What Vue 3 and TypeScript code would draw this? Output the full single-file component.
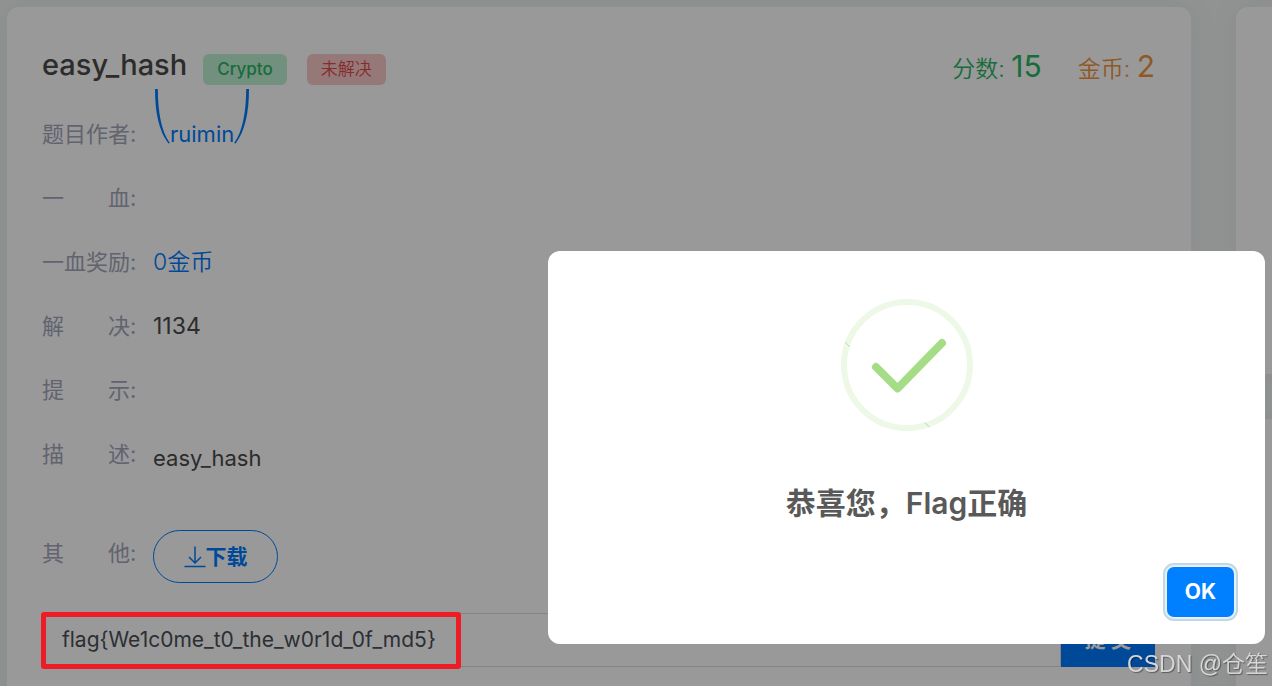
<script setup lang="ts">
import { ref } from 'vue'

interface Field {
  label: string
  value?: string
  kind?: 'author' | 'reward' | 'text' | 'description' | 'download'
}

const fields: Field[] = [
  { label: '题目作者:', value: 'ruimin', kind: 'author' },
  { label: '一　　血:' },
  { label: '一血奖励:', value: '0金币', kind: 'reward' },
  { label: '解　　决:', value: '1134', kind: 'text' },
  { label: '提　　示:' },
  { label: '描　　述:', value: 'easy_hash', kind: 'description' },
  { label: '其　　他:', value: '下载', kind: 'download' },
]

const flag = ref('flag{We1c0me_t0_the_w0r1d_0f_md5}')
const open = ref(true)
</script>

<template>
  <div class="page">
    <main class="card challenge">
      <header class="head">
        <h1>easy_hash</h1>
        <span class="badge green">Crypto</span>
        <span class="badge red">未解决</span>
        <div class="stats">
          <span class="score">分数: <b>15</b></span>
          <span class="coins">金币: <b>2</b></span>
        </div>
      </header>

      <dl class="fields">
        <div v-for="f in fields" :key="f.label" class="row" :class="f.kind">
          <dt>{{ f.label }}</dt>
          <dd>
            <a v-if="f.kind === 'author'" href="#" class="author-link">
              <svg class="parens" width="96" height="56" viewBox="0 0 96 56" aria-hidden="true">
                <path d="M1 0H3.8C4 24 7.400 42 15.800 54L14.400 54.600C5 42 1 24 1 0Z" />
                <path d="M95 0H92.200C92 24 88.600 42 80.200 54L81.600 54.600C91 42 95 24 95 0Z" />
              </svg>
              {{ f.value }}
            </a>
            <button v-else-if="f.kind === 'download'" type="button" class="download">
              <svg width="22" height="22" viewBox="0 0 22 22" aria-hidden="true">
                <path d="M11 0.5V16M5 11L11 17L17 11M0.5 20.5H21.5" />
              </svg>
              <span>{{ f.value }}</span>
            </button>
            <template v-else>{{ f.value }}</template>
          </dd>
        </div>
      </dl>

      <form class="answer" @submit.prevent="open = true">
        <input v-model="flag" type="text" aria-label="Flag" spellcheck="false" />
        <button type="submit">提 交</button>
        <span class="marker"></span>
      </form>
    </main>

    <aside class="side">
      <div class="card side-top"></div>
      <div class="card side-rest"></div>
    </aside>

    <div v-if="open" class="overlay">
      <section class="modal" role="dialog" aria-labelledby="dialog-title">
        <svg class="success" width="132" height="132" viewBox="0 0 132 132" aria-hidden="true">
          <circle cx="66" cy="66" r="63" />
          <path class="tick" d="M35 68L56.500 89.500L101 44" />
          <path class="seam" d="M4 43L9 48M83.500 123.500L88.500 128" />
        </svg>
        <h2 id="dialog-title">恭喜您，Flag正确</h2>
        <button type="button" class="ok" @click="open = false">OK</button>
      </section>
    </div>

    <span class="watermark">CSDN @仓笙</span>
  </div>
</template>

<style>
html,
body {
  overflow: hidden;
}
</style>

<style scoped>
* {
  box-sizing: border-box;
}

.page {
  display: flex;
  gap: 45px;
  height: 100vh;
  padding: 7px 0 0 7px;
  overflow: hidden;
  background: #f2f5f5;
  color: #4a4a4a;
  font-family: Inter, "Noto Sans CJK SC", sans-serif;
  font-size: 22px;
  line-height: 32px;
}

button,
input {
  font: inherit;
}

.card {
  background: #fff;
  border-radius: 12px;
  box-shadow: 0 0 28px rgba(80, 95, 110, 0.08);
}

.challenge {
  flex: 1;
  min-width: 0;
  height: 760px;
  padding: 38px 36px 38px 35px;
}

.side {
  display: flex;
  flex: 0 0 36px;
  flex-direction: column;
  gap: 45px;
  min-width: 0;
}

.side .card {
  width: 400px;
}

.side-top {
  height: 367px;
  flex-shrink: 0;
}

.side-rest {
  height: 400px;
  flex-shrink: 0;
}

.head {
  display: flex;
  align-items: center;
  height: 40px;
}

h1 {
  margin: 0 16px 0 0;
  font-size: 29px;
  font-weight: 500;
  line-height: 40px;
}

.badge {
  height: 31px;
  margin: 8px 20px 0 0;
  padding: 0 14px;
  border-radius: 6px;
  font-size: 17px;
  line-height: 31px;
}

.green {
  background: #bff0d3;
  color: #28b463;
  font-weight: 500;
}

.red {
  background: #f9c8c8;
  color: #e04848;
  font-weight: 350;
}

.stats {
  display: flex;
  gap: 36px;
  margin: 4px 0 0 auto;
  font-size: 23px;
  font-weight: 350;
}

.stats b {
  font-size: 30px;
  font-weight: 400;
}

.score {
  color: #28b463;
}

.coins {
  color: #ef9440;
}

.fields {
  margin: 26px 0 0;
}

.row {
  display: flex;
  gap: 14px;
  height: 64px;
  padding-top: 7px;
}

dt {
  flex: 0 0 97px;
  color: #a3a6ba;
  font-weight: 400;
  white-space: nowrap;
}

dd {
  margin: 0;
}

.reward dd {
  color: #007bff;
  font-size: 23px;
  font-weight: 350;
}

.text dd {
  font-size: 23px;
}

.description {
  height: 99px;
}

.description dd {
  padding-top: 4px;
}

.download.row {
  height: 83px;
}

.author-link {
  position: relative;
  display: block;
  padding-left: 17px;
  color: #007bff;
  text-decoration: none;
}

.parens {
  position: absolute;
  bottom: 5px;
  left: 1px;
  fill: currentColor;
}

button.download {
  display: flex;
  align-items: center;
  justify-content: center;
  width: 125px;
  height: 53px;
  margin-top: -7px;
  padding: 0;
  border: 1px solid #007bff;
  border-radius: 27px;
  background: transparent;
  color: #007bff;
  font-size: 21px;
  font-weight: 700;
}

.download svg {
  fill: none;
  stroke: currentColor;
  stroke-width: 1.5;
}

.answer {
  position: relative;
  display: flex;
  height: 54px;
}

.answer input {
  flex: 1;
  min-width: 0;
  padding: 0 19px;
  border: 1px solid #dcdcdc;
  background: transparent;
  color: #4a4f57;
  font-size: 21px;
  outline: none;
}

.answer button {
  width: 94px;
  padding: 0;
  border: 0;
  background: #007bff;
  color: #fff;
  font-size: 21px;
  font-weight: 700;
}

.marker {
  position: absolute;
  z-index: 20;
  top: -1px;
  left: -1px;
  width: 420px;
  height: 57px;
  border: 5px solid #ee1c25;
  border-radius: 3px;
  pointer-events: none;
}

.overlay {
  position: fixed;
  z-index: 10;
  inset: 0;
  background: rgba(0, 0, 0, 0.4);
}

.modal {
  position: absolute;
  top: 251px;
  right: 7px;
  display: flex;
  flex-direction: column;
  align-items: center;
  width: 717px;
  padding: 48px 31px 27px;
  border-radius: 12px;
  background: #fff;
}

.success {
  fill: none;
}

.success circle {
  stroke: #edf8e7;
  stroke-width: 6;
}

.tick {
  stroke: #a5dc86;
  stroke-width: 8;
  stroke-linecap: round;
  stroke-linejoin: round;
}

.seam {
  stroke: #b5e29c;
  stroke-width: 1;
}

h2 {
  margin: 52px 0 44px;
  color: #595959;
  font-size: 30px;
  font-weight: 600;
  line-height: 40px;
}

.ok {
  align-self: flex-end;
  width: 67px;
  height: 50px;
  padding: 0;
  border: 0;
  border-radius: 7px;
  background: #0080ff;
  box-shadow: 0 0 0 2px #e6f1fb, 0 0 0 4px #c3d7e6;
  color: #fff;
  font-size: 21px;
  font-weight: 700;
}

.watermark {
  position: fixed;
  z-index: 30;
  right: 4px;
  bottom: 6px;
  color: #d6d6d6;
  font-family: "Liberation Sans", "Noto Sans CJK SC", sans-serif;
  font-size: 23px;
  font-weight: 350;
  text-shadow: 1px 1px 1px rgba(0, 0, 0, 0.4);
}
</style>
